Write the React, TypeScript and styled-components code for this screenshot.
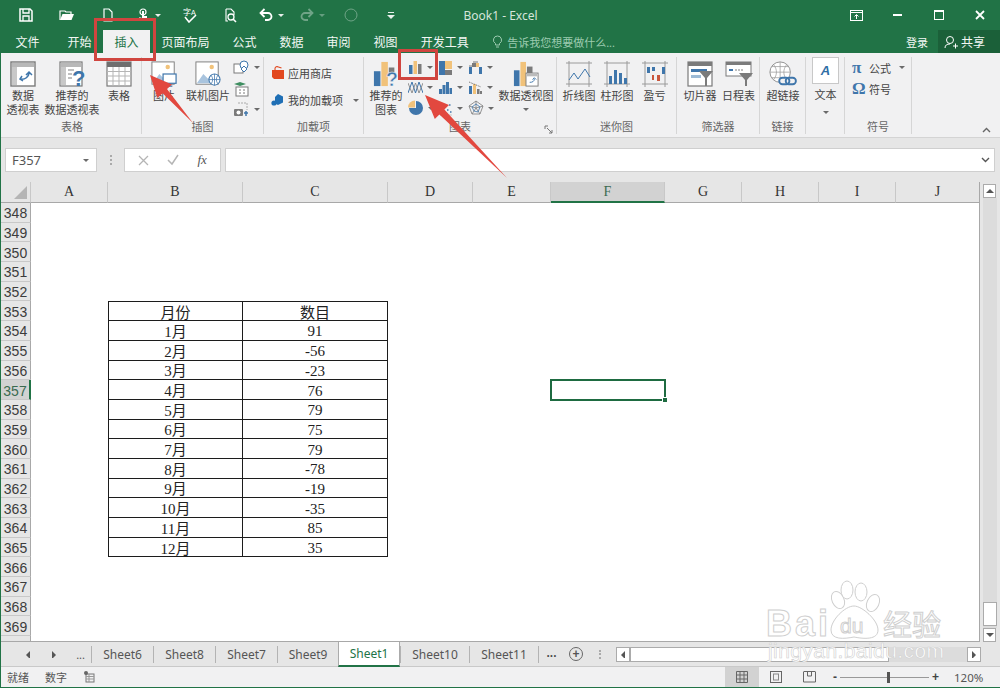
import React from "react";
import styled, { createGlobalStyle } from "styled-components";

const GREEN = "#217346";
const UI_FONT = `"Noto Sans", "Noto Sans CJK SC", sans-serif`;

const GlobalStyle = createGlobalStyle`
  html, body {
    margin: 0;
    padding: 0;
    background: #fff;
  }
  * {
    box-sizing: border-box;
  }
`;

const Window = styled.div`
  position: relative;
  width: 1000px;
  height: 688px;
  overflow: hidden;
  display: flex;
  flex-direction: column;
  border-left: 1px solid ${GREEN};
  border-bottom: 1px solid ${GREEN};
  font-family: ${UI_FONT};
  color: #444;
  font-size: 11px;
`;

/* ---- title bar ---- */
const TitleBar = styled.div`
  height: 30px;
  flex: none;
  background: ${GREEN};
  display: grid;
  grid-template-columns: 1fr auto 1fr;
  align-items: center;
`;

const Qat = styled.div`
  display: flex;
  align-items: center;
  padding-left: 4px;
`;

const QatButton = styled.div<{ $w?: number; $dim?: boolean }>`
  width: ${(p) => p.$w ?? 41}px;
  height: 30px;
  display: flex;
  align-items: center;
  justify-content: center;
  gap: 5px;
  opacity: ${(p) => (p.$dim ? 0.35 : 1)};
`;

const WhiteCaret = styled.span`
  width: 0;
  height: 0;
  border-left: 3px solid transparent;
  border-right: 3px solid transparent;
  border-top: 3px solid #e8f0eb;
`;

const DocTitle = styled.div`
  color: #d5e5db;
  font-size: 12px;
`;

const WindowButtons = styled.div`
  display: flex;
  justify-content: flex-end;
`;

const WindowButton = styled.div`
  width: 41px;
  height: 30px;
  display: flex;
  align-items: center;
  justify-content: center;
`;

/* ---- ribbon tabs ---- */
const TabRow = styled.div`
  height: 23px;
  flex: none;
  background: ${GREEN};
  display: flex;
  align-items: stretch;
  padding-left: 3px;
`;

const RibbonTab = styled.div<{ $active?: boolean; $file?: boolean }>`
  padding: 0 11.5px;
  margin-right: ${(p) => (p.$file ? 5 : 0)}px;
  display: flex;
  align-items: center;
  font-size: 12px;
  color: ${(p) => (p.$active ? "#217346" : "#f2f7f4")};
  background: ${(p) => (p.$active ? "#f1f1f2" : "transparent")};
`;

const TellMe = styled.div`
  display: flex;
  align-items: center;
  gap: 4px;
  margin-left: 12px;
  color: #9ccbb0;
  font-size: 11px;
`;

const TabRowEnd = styled.div`
  margin-left: auto;
  display: flex;
  align-items: stretch;
  color: #f2f7f4;
  font-size: 11px;
`;

const SignIn = styled.div`
  display: flex;
  align-items: center;
  padding-right: 10px;
`;

const ShareButton = styled.div`
  width: 62px;
  background: #1b6039;
  display: flex;
  align-items: center;
  gap: 3px;
  padding-left: 6px;
  font-size: 12px;
`;

/* ---- ribbon ---- */
const Ribbon = styled.div`
  position: relative;
  height: 85px;
  flex: none;
  background: #f1f1f2;
  display: flex;
  padding: 4px 0 3px 2px;
  border-bottom: 1px solid #d4d4d4;
`;

const Group = styled.div<{ $w: number }>`
  width: ${(p) => p.$w}px;
  flex: none;
  display: flex;
  flex-direction: column;
  border-right: 1px solid #d6d6d6;
`;

const GroupBody = styled.div<{ $pad?: number }>`
  flex: 1;
  display: flex;
  align-items: flex-start;
  min-height: 0;
  padding-left: ${(p) => p.$pad ?? 0}px;
`;

const GroupLabel = styled.div`
  height: 16px;
  line-height: 17px;
  text-align: center;
  color: #666;
  font-size: 11px;
`;

const BigButton = styled.div<{ $w: number }>`
  width: ${(p) => p.$w}px;
  flex: none;
  display: flex;
  flex-direction: column;
  align-items: center;
  padding-top: 4px;
  line-height: 14px;
  text-align: center;
  white-space: nowrap;
  svg {
    margin-bottom: 2px;
    display: block;
    height: 26px;
    width: auto;
  }
`;

const Caret = styled.span`
  display: inline-block;
  flex: none;
  width: 0;
  height: 0;
  border-left: 3px solid transparent;
  border-right: 3px solid transparent;
  border-top: 3px solid #6a6a6a;
`;

const CaretLine = styled.div`
  height: 12px;
  display: flex;
  align-items: center;
  justify-content: center;
`;

const SmallColumn = styled.div`
  display: flex;
  flex-direction: column;
  padding-left: 3px;
`;

const SmallIconRow = styled.div`
  height: 21px;
  display: flex;
  align-items: center;
  gap: 5px;
`;

const AddinColumn = styled.div`
  width: 100%;
  display: flex;
  flex-direction: column;
  gap: 5px;
  padding: 5px 0 0 7px;
`;

const AddinRow = styled.div`
  height: 22px;
  display: flex;
  align-items: center;
  gap: 3px;
  white-space: nowrap;
`;

const AddinCaret = styled(Caret)`
  margin-left: 7px;
`;

const ChartMatrix = styled.div`
  width: 89px;
  flex: none;
  display: grid;
  grid-template-columns: repeat(3, 30px);
  grid-auto-rows: 20.5px;
`;

const ChartCell = styled.div`
  display: flex;
  align-items: center;
  gap: 4px;
`;

const DialogLauncher = styled.svg`
  position: absolute;
  right: 3px;
  bottom: 0;
`;

const ChartsGroup = styled(Group)`
  position: relative;
`;

const TextBox = styled.div`
  width: 27px;
  height: 27px;
  background: #fff;
  border: 1px solid #c8c8c8;
  display: flex;
  align-items: center;
  justify-content: center;
  color: #2f6ea5;
  font: italic bold 13px "Liberation Sans", sans-serif;
`;

const TextButton = styled(BigButton)`
  padding-top: 0;
  gap: 4px;
`;

const SymbolColumn = styled.div`
  display: flex;
  flex-direction: column;
  padding-left: 7px;
  width: 100%;
`;

const SymbolRow = styled.div`
  height: 21px;
  display: flex;
  align-items: center;
  white-space: nowrap;
`;

const SymbolGlyph = styled.span`
  width: 17px;
  flex: none;
  color: #3f76ab;
  font: bold 17px "Liberation Serif", serif;
`;

const SymbolCaret = styled(Caret)`
  margin-left: 8px;
`;

const CollapseChevron = styled.svg`
  position: absolute;
  right: 9px;
  bottom: 4px;
`;

/* ---- formula bar ---- */
const FormulaBar = styled.div`
  height: 44px;
  flex: none;
  background: #e6e6e6;
  display: flex;
  align-items: center;
  padding: 0 5px 0 4px;
`;

const NameBox = styled.div`
  width: 92px;
  height: 24px;
  background: #fff;
  border: 1px solid #cfcfcf;
  display: flex;
  align-items: center;
  justify-content: space-between;
  padding: 0 7px 0 6px;
  font-size: 13px;
  color: #555;
`;

const GripDots = styled.div`
  width: 27px;
  display: flex;
  flex-direction: column;
  align-items: center;
  gap: 2px;
  i {
    width: 2px;
    height: 2px;
    background: #aaa;
  }
`;

const FormulaTools = styled.div`
  width: 97px;
  height: 24px;
  background: #fff;
  border: 1px solid #cfcfcf;
  display: flex;
  align-items: center;
  justify-content: space-around;
  padding: 0 4px;
  margin-right: 4px;
`;

const FxLabel = styled.span`
  font: italic 13px "Liberation Serif", serif;
  color: #555;
`;

const FormulaInput = styled.div`
  flex: 1;
  height: 24px;
  background: #fff;
  border: 1px solid #cfcfcf;
  display: flex;
  align-items: center;
  justify-content: flex-end;
  padding-right: 4px;
`;

/* ---- sheet ---- */
const SheetArea = styled.div`
  flex: 1;
  min-height: 0;
  display: flex;
  background: #e6e6e6;
`;

const SheetGrid = styled.div`
  position: relative;
  width: 979px;
  flex: none;
  overflow: hidden;
  background: #fff;
  border-right: 1px solid #a8a8a8;
  border-bottom: 1px solid #a8a8a8;
  display: grid;
  grid-template-columns: 30px 77px 135px 145px 85px 78px 114px 77px 77px 77px 84px;
  grid-template-rows: 21px;
  grid-auto-rows: 19.7px;
  align-content: start;
`;

const Corner = styled.div`
  background: #e6e6e6;
  border-right: 1px solid #c8c8c8;
  border-bottom: 1px solid #a8a8a8;
  display: flex;
  align-items: flex-end;
  justify-content: flex-end;
  padding: 0 3px 3px 0;
`;

const ColHeader = styled.div<{ $selected?: boolean }>`
  background: ${(p) => (p.$selected ? "#d2d2d2" : "#e6e6e6")};
  border-right: 1px solid #c8c8c8;
  border-bottom: ${(p) => (p.$selected ? `2px solid ${GREEN}` : "1px solid #a8a8a8")};
  display: flex;
  align-items: center;
  justify-content: center;
  font: 14px "Liberation Serif", serif;
  color: ${(p) => (p.$selected ? "#3a6a50" : "#333")};
`;

const RowHeader = styled.div<{ $selected?: boolean }>`
  background: ${(p) => (p.$selected ? "#d2d2d2" : "#e6e6e6")};
  border-bottom: 1px solid #c8c8c8;
  border-right: ${(p) => (p.$selected ? `2px solid ${GREEN}` : "1px solid #a8a8a8")};
  display: flex;
  align-items: center;
  justify-content: center;
  padding-top: 2px;
  font: 14px "Liberation Sans", sans-serif;
  color: ${(p) => (p.$selected ? "#3a6a50" : "#3c3c3c")};
`;

const Cell = styled.div<{ $table?: boolean; $first?: boolean; $top?: boolean; $num?: boolean }>`
  position: relative;
  display: flex;
  align-items: center;
  justify-content: center;
  font: 15px "Liberation Serif", "Noto Sans CJK SC", serif;
  color: #222;
  padding-top: ${(p) => (p.$num ? 3 : 0)}px;
  ${(p) => (p.$table ? "border-right: 1px solid #1c1c1c; border-bottom: 1px solid #1c1c1c;" : "")}
  ${(p) => (p.$first ? "border-left: 1px solid #1c1c1c;" : "")}
  ${(p) => (p.$top ? "border-top: 1px solid #1c1c1c;" : "")}
`;

const ActiveCell = styled(Cell)`
  outline: 2px solid #1e6b41;
  outline-offset: -1px;
`;

const FillHandle = styled.span`
  position: absolute;
  right: -3px;
  bottom: -3px;
  width: 6px;
  height: 6px;
  background: #1e6b41;
  border: 1px solid #fff;
`;

const VScroll = styled.div`
  width: 20px;
  flex: none;
  display: flex;
  flex-direction: column;
  padding: 2px 3px 0 3px;
`;

const ScrollArrow = styled.div`
  width: 13px;
  height: 14px;
  background: #fff;
  border: 1px solid #ababab;
  flex: none;
  display: flex;
  align-items: center;
  justify-content: center;
`;

const VScrollTrack = styled.div`
  flex: 1;
  background: #dcdcdc;
  display: flex;
  flex-direction: column;
  justify-content: flex-end;
  padding-bottom: 2px;
`;

const VScrollThumb = styled.div`
  height: 24px;
  background: #fff;
  border: 1px solid #ababab;
`;

/* ---- sheet tabs ---- */
const SheetBar = styled.div`
  height: 25px;
  flex: none;
  background: #e6e6e6;
  display: flex;
  align-items: center;
  border-bottom: 1px solid #c9c9c9;
`;

const SheetNav = styled.div`
  width: 90px;
  flex: none;
  display: flex;
  align-items: center;
  justify-content: flex-end;
  gap: 18px;
  padding-right: 6px;
  color: #555;
`;

const SheetTab = styled.div<{ $active?: boolean; $w: number }>`
  width: ${(p) => p.$w}px;
  height: ${(p) => (p.$active ? 25 : 17)}px;
  flex: none;
  display: flex;
  align-items: center;
  justify-content: center;
  font-size: 12px;
  color: ${(p) => (p.$active ? GREEN : "#555")};
  background: ${(p) => (p.$active ? "#fff" : "transparent")};
  border-left: 1px solid ${(p) => (p.$active ? "#ababab" : "#b3b3b3")};
  border-right: ${(p) => (p.$active ? "1px solid #ababab" : "none")};
  border-bottom: ${(p) => (p.$active ? `2px solid ${GREEN}` : "none")};
`;

const SheetEllipsis = styled.div`
  width: 26px;
  flex: none;
  height: 17px;
  border-left: 1px solid #b3b3b3;
  text-align: center;
  line-height: 14px;
  font-size: 12px;
  font-weight: 600;
`;

const AddSheet = styled.div`
  width: 14px;
  height: 14px;
  flex: none;
  border: 1.4px solid #666;
  border-radius: 50%;
  margin-left: 5px;
  display: flex;
  align-items: center;
  justify-content: center;
  color: #555;
  font: bold 12px/12px "Liberation Sans", sans-serif;
`;

const HGrip = styled(GripDots)`
  width: 33px;
  gap: 1.5px;
`;

const HScroll = styled.div`
  width: 365px;
  height: 15px;
  flex: none;
  background: #dcdcdc;
  display: flex;
  align-items: stretch;
`;

const HScrollArrow = styled.div`
  width: 14px;
  background: #fff;
  border: 1px solid #ababab;
  display: flex;
  align-items: center;
  justify-content: center;
`;

const HScrollThumb = styled.div`
  width: 259px;
  background: #fff;
  border: 1px solid #ababab;
`;

const HScrollRest = styled.div`
  flex: 1;
`;

/* ---- status bar ---- */
const StatusBar = styled.div`
  height: 20px;
  flex: none;
  background: #f1f1f2;
  display: flex;
  align-items: center;
  padding-left: 6px;
  gap: 16px;
  color: #555;
`;

const StatusRight = styled.div`
  margin-left: auto;
  display: flex;
  align-items: center;
  height: 100%;
`;

const ViewButton = styled.div<{ $active?: boolean }>`
  width: 34px;
  height: 100%;
  display: flex;
  align-items: center;
  justify-content: center;
  background: ${(p) => (p.$active ? "#d2d2d2" : "transparent")};
`;

const ZoomBar = styled.div`
  display: flex;
  align-items: center;
  gap: 3px;
  margin-left: 6px;
  color: #444;
  font: bold 12px "Liberation Sans", sans-serif;
`;

const ZoomTrack = styled.div`
  position: relative;
  width: 89px;
  height: 1px;
  background: #999;
`;

const ZoomThumb = styled.span`
  position: absolute;
  left: 47px;
  top: -5px;
  width: 3px;
  height: 11px;
  background: #555;
`;

const ZoomValue = styled.div`
  width: 61px;
  padding-left: 15px;
  color: #555;
  font: 11.5px "Noto Sans", sans-serif;
`;

const Annotation = styled.svg`
  position: absolute;
  left: -1px;
  top: 0;
  pointer-events: none;
`;

/* ---- icons ---- */
const G = "#7b7b7b";
const B = "#3f76ab";
const O = "#f1c27a";

const Sv: React.FC<{ w: number; h?: number; children: React.ReactNode }> = ({ w, h, children }) => (
  <svg width={w} height={h ?? w} viewBox={`0 0 ${w} ${h ?? w}`} fill="none">
    {children}
  </svg>
);

const SaveIcon = () => (
  <Sv w={14}>
    <path d="M1 1h10l2 2v10H1z" stroke="#fff" strokeWidth="1.5" />
    <path d="M4 1v4h6V1M4 13V8h6v5" stroke="#fff" strokeWidth="1.3" />
  </Sv>
);
const OpenIcon = () => (
  <Sv w={16}>
    <path d="M1 13V4h5l1 1h5v2" stroke="#fff" strokeWidth="1.2" />
    <path d="M1 13l2.5-6H15l-2.5 6z" fill="#fff" />
  </Sv>
);
const NewIcon = () => (
  <Sv w={14}>
    <path d="M3 1h5l3 3v9H3z" stroke="#fff" strokeWidth="1.2" />
  </Sv>
);
const TouchIcon = () => (
  <Sv w={14}>
    <circle cx="7" cy="4" r="3" stroke="#fff" strokeWidth="1.2" />
    <path d="M6 3h2v5h3v3l-1 2H5L3 9l3 1z" fill="#fff" />
  </Sv>
);
const SpellIcon = () => (
  <Sv w={16}>
    <text x="1" y="8" fontSize="8" fill="#fff" fontFamily="Noto Sans CJK SC">字</text>
    <text x="9" y="8" fontSize="7" fill="#fff" fontFamily="Liberation Sans">A</text>
    <path d="M3 10l4 5 7-7" stroke="#fff" strokeWidth="1.6" />
  </Sv>
);
const PreviewIcon = () => (
  <Sv w={15}>
    <path d="M3 1h5l3 3v3M5 13H3V1" stroke="#fff" strokeWidth="1.1" />
    <circle cx="8" cy="9" r="3" stroke="#fff" strokeWidth="1.3" />
    <path d="M10 11l3 3" stroke="#fff" strokeWidth="1.6" />
  </Sv>
);
const UndoIcon = ({ flip }: { flip?: boolean }) => (
  <Sv w={14}>
    <g transform={flip ? "translate(14 0) scale(-1 1)" : undefined}>
      <path d="M2 5h7a3.5 3.5 0 0 1 0 7H6" stroke="#fff" strokeWidth="1.8" />
      <path d="M5.5 1L1.5 5l4 4" stroke="#fff" strokeWidth="1.8" />
    </g>
  </Sv>
);

const PivotIcon = () => (
  <Sv w={26}>
    <rect x="1" y="1" width="24" height="24" fill="#fff" stroke={G} strokeWidth="1.4" />
    <rect x="2" y="2" width="22" height="4" fill="#b8b8b8" />
    <rect x="2" y="6" width="5" height="18" fill="#c8c8c8" />
    <path d="M10 18c5 1 9-2 9-7M16 14l3-3 3 3M12 15l-2 3 3 2" stroke={B} strokeWidth="1.5" />
  </Sv>
);
const RecommendPivotIcon = () => (
  <Sv w={26}>
    <rect x="1" y="1" width="22" height="24" fill="#fff" stroke={G} strokeWidth="1.2" />
    <rect x="2" y="2" width="20" height="4" fill="#b8b8b8" />
    <rect x="2" y="6" width="5" height="18" fill="#c8c8c8" />
    <path d="M9 9h6M9 13h4M9 17h4" stroke="#aaa" strokeWidth="1.4" />
    <text x="13" y="25" fontSize="22" fontWeight="bold" fill={B} fontFamily="Liberation Sans">?</text>
  </Sv>
);
const TableIcon = () => (
  <Sv w={26}>
    <rect x="1" y="1" width="24" height="24" fill="#fff" stroke={G} strokeWidth="1.2" />
    <rect x="1" y="1" width="24" height="5" fill="#6f6f6f" />
    <path d="M1 10.5h24M1 15h24M1 20h24M7 6v19M13 6v19M19 6v19" stroke="#b5b5b5" />
  </Sv>
);
const PictureFrame = () => (
  <>
    <rect x="1" y="1" width="24" height="24" fill="#fff" stroke={G} strokeWidth="1" />
    <circle cx="18" cy="6.5" r="2.4" fill={O} />
    <path d="M2 24l7-10 5 5 3-3 7 8z" fill="#a9c4de" />
  </>
);
const PictureIcon = () => (
  <Sv w={28}>
    <PictureFrame />
    <rect x="13" y="14" width="14" height="10" fill="#fff" stroke={B} strokeWidth="1.3" />
    <path d="M17 27h6M20 24v3" stroke={B} strokeWidth="1.3" />
  </Sv>
);
const OnlinePictureIcon = () => (
  <Sv w={28}>
    <PictureFrame />
    <circle cx="21" cy="20" r="6" fill="#fff" stroke={B} strokeWidth="1.1" />
    <path d="M15 20h12M21 14v12M17.5 15.5c2 3 2 6 0 9M24.5 15.5c-2 3-2 6 0 9" stroke={B} strokeWidth=".8" />
  </Sv>
);
const ShapesIcon = () => (
  <Sv w={16}>
    <rect x="1" y="4" width="9" height="9" fill="#fff" stroke={G} />
    <circle cx="11" cy="5" r="4" fill="#fff" stroke={B} />
    <path d="M8 9l3 3 3-3-3-3z" fill="#fff" stroke={B} />
  </Sv>
);
const SmartArtIcon = () => (
  <Sv w={16}>
    <path d="M1 3l6-2 6 2-6 2z" fill="#3e8e60" />
    <rect x="3" y="6" width="12" height="9" fill="#fff" stroke={G} />
    <path d="M6 9h2M10 9h2M6 12h2M10 12h2" stroke={G} />
  </Sv>
);
const ScreenshotIcon = () => (
  <Sv w={16}>
    <path d="M5 1h9v7" stroke="#aaa" strokeDasharray="2 1" />
    <rect x="1" y="7" width="9" height="7" rx="1" fill={G} />
    <circle cx="5.5" cy="10.5" r="2" fill="#fff" />
    <path d="M11 11h4M13 9v5" stroke={B} strokeWidth="1.5" />
  </Sv>
);
const StoreIcon = () => (
  <Sv w={14}>
    <path d="M1 4h12v9H3l-2-2z" fill="#e2481f" />
    <path d="M4 5V2.5C4 1 6 0 7.5 1l3 1" stroke="#e2481f" strokeWidth="1.1" />
  </Sv>
);
const AddinIcon = () => (
  <Sv w={14}>
    <path d="M7 1l5 2.5v6L7 12 4 10.5V4z" fill="#1f6fb5" />
    <circle cx="3" cy="10" r="2.6" fill="#1f6fb5" />
  </Sv>
);
const RecommendChartIcon = () => (
  <Sv w={28}>
    <rect x="1" y="11" width="7" height="16" fill={B} />
    <rect x="9" y="1" width="7" height="26" fill={O} />
    <rect x="17" y="7" width="6" height="6" fill={G} />
    <text x="14" y="27" fontSize="21" fontWeight="bold" fill={B} fontFamily="Liberation Sans" stroke="#f1f1f2" strokeWidth=".5">?</text>
  </Sv>
);
const BarsIcon = () => (
  <Sv w={15}>
    <rect x="1" y="5" width="3.5" height="9" fill={B} />
    <rect x="5.5" y="1" width="3.5" height="13" fill={O} />
    <rect x="10" y="4" width="3.5" height="10" fill={G} />
  </Sv>
);
const HierarchyIcon = () => (
  <Sv w={15}>
    <rect x="1" y="1" width="6" height="14" fill={B} />
    <rect x="7" y="1" width="7" height="8" fill={O} />
    <rect x="7" y="10" width="7" height="5" fill={G} />
  </Sv>
);
const WaterfallIcon = () => (
  <Sv w={15}>
    <path d="M1 14V7h3v7z" fill={B} />
    <path d="M4 7V3h4v4z" fill={G} />
    <path d="M8 3h3v4H8z" fill={O} />
    <path d="M11 7h3v7h-3z" fill={B} />
    <path d="M1 6h3M5 2h5" stroke={G} />
  </Sv>
);
const LineAreaIcon = () => (
  <Sv w={15}>
    <path d="M0 13L4 2l3.5 11L11 2l4 11" stroke={B} strokeWidth="1" />
    <path d="M0 3l4 10 3.500-10L11 13l4-10" stroke={G} strokeWidth=".8" />
  </Sv>
);
const HistogramIcon = () => (
  <Sv w={15}>
    <path d="M1 9h3v5H1zM4.5 5h3v9h-3zM8 2h3v12H8zM11.500 8H14v6h-2.500z" fill={B} />
  </Sv>
);
const ParetoIcon = () => (
  <Sv w={15}>
    <path d="M1 6h3v8H1z" fill={B} />
    <path d="M5 4h3v10H5z" fill={O} />
    <path d="M9 9h2.5v5H9zM12 11h2v3h-2z" fill={G} />
    <path d="M1 2l12 5" stroke={G} strokeDasharray="1.5 1" />
  </Sv>
);
const PieIcon = () => (
  <Sv w={16}>
    <path d="M8 8V1a7 7 0 1 1-7 7z" fill={B} />
    <path d="M7 7V0a7 7 0 0 0-7 7z" fill={O} transform="translate(0 .5)" />
  </Sv>
);
const ScatterIcon = () => (
  <Sv w={15}>
    <path d="M2 2v12h12" stroke="#c6c6c6" />
    <path d="M4 10h1.5M6 6h1.5M9 9h1.5M11 4h1.5M12 11h1.5" stroke={B} strokeWidth="1.5" />
  </Sv>
);
const RadarIcon = () => (
  <Sv w={16}>
    <path d="M8 1l7 5-3 8H4L1 6zM8 1v7M15 6L8 8M12 14L8 8M4 14l4-6M1 6l7 2" stroke={G} strokeWidth=".8" />
    <path d="M8 4l4 3-2 5-4-1-2-4z" stroke={B} strokeWidth=".8" />
  </Sv>
);
const PivotChartIcon = () => (
  <Sv w={28}>
    <rect x="1" y="10" width="6" height="17" fill={B} />
    <rect x="8" y="1" width="6" height="26" fill={O} />
    <rect x="15" y="6" width="6" height="7" fill={G} />
    <rect x="14" y="13" width="13" height="14" fill="#fff" stroke={G} />
    <rect x="15" y="14" width="11" height="2.5" fill="#bbb" />
    <path d="M18 23c3 0 5-1 5-4M21 20l2-2 2 2" stroke={B} />
  </Sv>
);
const SparkFrame = ({ children }: { children: React.ReactNode }) => (
  <Sv w={28} h={26}>
    <path d="M1 2h26M1 23h26M4 0v26M24 0v26" stroke="#9a9a9a" />
    {children}
  </Sv>
);
const SparkLineIcon = () => (
  <SparkFrame>
    <path d="M4 19l5-7 4 6 7-10 5 8" stroke={B} strokeWidth="1" />
  </SparkFrame>
);
const SparkBarIcon = () => (
  <SparkFrame>
    <path d="M6 15h3v8H6zM11 9h3v14h-3zM16 12h3v11h-3zM21 17h3v6h-3z" fill={B} />
  </SparkFrame>
);
const WinLossIcon = () => (
  <SparkFrame>
    <path d="M6 6h3v6H6zM11 6h3v4h-3zM21 6h3v7h-3z" fill={B} />
    <path d="M16 14h3v6h-3zM11 14h2v5h-2z" fill="#c9563c" />
  </SparkFrame>
);
const SlicerIcon = () => (
  <Sv w={26}>
    <rect x="1" y="1" width="24" height="24" fill="#fff" stroke={G} strokeWidth="1.2" />
    <rect x="1" y="1" width="24" height="4" fill={G} />
    <rect x="4" y="8" width="16" height="3" fill={B} />
    <rect x="4" y="14" width="10" height="3" fill="#9dbbd6" />
    <path d="M12 10h14l-6 7v8h-2v-8z" fill={G} />
  </Sv>
);
const TimelineIcon = () => (
  <Sv w={28} h={26}>
    <rect x="1" y="1" width="25" height="14" fill="#fff" stroke={G} />
    <rect x="1" y="1" width="25" height="3" fill={G} />
    <path d="M4 9h4" stroke={B} strokeWidth="2" />
    <path d="M10 9h8" stroke="#aaa" strokeWidth="1.5" strokeDasharray="2 1" />
    <path d="M14 12h14l-6 7v6h-2v-6z" fill={G} />
  </Sv>
);
const LinkIcon = () => (
  <Sv w={30} h={28}>
    <circle cx="12" cy="12" r="11" fill="#fff" stroke="#8c8c8c" />
    <path d="M1 12h22M12 1v22M5 4c4 5 4 11 0 16M19 4c-4 5-4 11 0 16M3 6h18M3 18h18" stroke="#9a9a9a" strokeWidth=".8" />
    <rect x="11" y="18" width="11" height="7" rx="3.5" stroke={B} strokeWidth="2" fill="#f1f1f2" />
    <rect x="18" y="18" width="11" height="7" rx="3.5" stroke={B} strokeWidth="2" />
  </Sv>
);
const Chevron = ({ color = "#666" }: { color?: string }) => (
  <svg width="9" height="6" viewBox="0 0 9 6" fill="none">
    <path d="M1 1l3.5 3.5L8 1" stroke={color} strokeWidth="1.4" />
  </svg>
);
const ArrowTri = ({ dir }: { dir: "up" | "down" | "left" | "right" }) => {
  const d = { up: "M0 5l4-4 4 4z", down: "M0 1l4 4 4-4z", left: "M6 0v8L2 4z", right: "M2 0v8l4-4z" }[dir];
  return (
    <svg width="8" height="8" viewBox="0 0 8 6" fill="#555">
      <path d={d} />
    </svg>
  );
};

const Watermark = () => (
  <g fill="#fff" stroke="#cfcfcf" strokeWidth="1" fontFamily="Liberation Sans, sans-serif">
    <ellipse cx="838" cy="600" rx="6" ry="9" transform="rotate(-25 838 600)" />
    <ellipse cx="847" cy="590" rx="6" ry="9" />
    <ellipse cx="861" cy="592" rx="6" ry="9" />
    <ellipse cx="873" cy="603" rx="6" ry="9" transform="rotate(25 873 603)" />
    <path d="M854 606c8 0 24 14 24 24s-14 9-24 7c-10 2-23 3-23-7s14-24 23-24z" />
    <text x="766" y="636" fontSize="36" fontWeight="bold" fill="#fff" textLength="62">Bai</text>
    <text x="840" y="633" fontSize="21" fill="#fff">du</text>
    <text x="883" y="636" fontSize="29" fill="#fff" fontFamily="Noto Sans CJK SC">经验</text>
    <text x="768" y="658" fontSize="21" fill="#fff" strokeWidth=".6" textLength="176">jingyan.baidu.com</text>
  </g>
);

const Arrow = ({ points }: { points: string }) => <polygon points={points} fill="#e2483f" />;

/* ---- data ---- */
const qat = [SaveIcon, OpenIcon, NewIcon];
const tabs = ["开始", "插入", "页面布局", "公式", "数据", "审阅", "视图", "开发工具"];
const columns = ["A", "B", "C", "D", "E", "F", "G", "H", "I", "J"];
const rows = Array.from({ length: 23 }, (_, i) => 348 + i);
const tableData: [string, string][] = [
  ["月份", "数目"],
  ["1月", "91"],
  ["2月", "-56"],
  ["3月", "-23"],
  ["4月", "76"],
  ["5月", "79"],
  ["6月", "75"],
  ["7月", "79"],
  ["8月", "-78"],
  ["9月", "-19"],
  ["10月", "-35"],
  ["11月", "85"],
  ["12月", "35"],
];
const sheetTabs = [
  { name: "Sheet6", w: 62 },
  { name: "Sheet8", w: 62 },
  { name: "Sheet7", w: 62 },
  { name: "Sheet9", w: 61 },
  { name: "Sheet1", w: 62, active: true },
  { name: "Sheet10", w: 69 },
  { name: "Sheet11", w: 69 },
];

const chartIcons = [
  BarsIcon,
  HierarchyIcon,
  WaterfallIcon,
  LineAreaIcon,
  HistogramIcon,
  ParetoIcon,
  PieIcon,
  ScatterIcon,
  RadarIcon,
];

const SheetRows = () => (
  <>
    <Corner>
      <svg width="13" height="13" viewBox="0 0 13 13">
        <path d="M13 0v13H0z" fill="#b5b5b5" />
      </svg>
    </Corner>
    {columns.map((c) => (
      <ColHeader key={c} $selected={c === "F"}>
        {c}
      </ColHeader>
    ))}
    {rows.map((r) => {
      const data = tableData[r - 353];
      return (
        <React.Fragment key={r}>
          <RowHeader $selected={r === 357}>{r}</RowHeader>
          {columns.map((c, i) => {
            if (c === "F" && r === 357) {
              return (
                <ActiveCell key={c}>
                  <FillHandle />
                </ActiveCell>
              );
            }
            if (data && (c === "B" || c === "C")) {
              return (
                <Cell key={c} $table $first={c === "B"} $top={r === 353} $num={c === "C" && r > 353}>
                  {data[i - 1]}
                </Cell>
              );
            }
            return <Cell key={c} />;
          })}
        </React.Fragment>
      );
    })}
  </>
);

const App: React.FC = () => {
  return (
    <Window>
      <GlobalStyle />
      <TitleBar>
        <Qat>
          {qat.map((Icon, i) => (
            <QatButton key={i}>
              <Icon />
            </QatButton>
          ))}
          <QatButton>
            <TouchIcon />
            <WhiteCaret />
          </QatButton>
          <QatButton>
            <SpellIcon />
          </QatButton>
          <QatButton>
            <PreviewIcon />
          </QatButton>
          <QatButton>
            <UndoIcon />
            <WhiteCaret />
          </QatButton>
          <QatButton $dim>
            <UndoIcon flip />
            <WhiteCaret />
          </QatButton>
          <QatButton $w={36} $dim>
            <Sv w={14}>
              <circle cx="7" cy="7" r="6" stroke="#fff" />
            </Sv>
          </QatButton>
          <QatButton $w={44}>
            <svg width="8" height="7" viewBox="0 0 8 7">
              <path d="M1 0h6v1H1zM0 3h8L4 7z" fill="#e8f0eb" />
            </svg>
          </QatButton>
        </Qat>
        <DocTitle>Book1 - Excel</DocTitle>
        <WindowButtons>
          <WindowButton>
            <Sv w={13} h={11}>
              <rect x=".5" y=".5" width="12" height="10" stroke="#fff" />
              <path d="M1 2.5h11" stroke="#fff" />
              <path d="M6.5 9V5M4.5 6.5l2-2 2 2" stroke="#fff" />
            </Sv>
          </WindowButton>
          <WindowButton>
            <Sv w={9} h={3}>
              <rect width="9" height="2" fill="#fff" />
            </Sv>
          </WindowButton>
          <WindowButton>
            <Sv w={10}>
              <rect x=".5" y="1" width="9" height="8.5" stroke="#fff" />
              <rect x="0" y="0" width="10" height="2" fill="#fff" />
            </Sv>
          </WindowButton>
          <WindowButton>
            <Sv w={10}>
              <path d="M1 1l8 8M9 1l-8 8" stroke="#fff" strokeWidth="1.8" />
            </Sv>
          </WindowButton>
        </WindowButtons>
      </TitleBar>

      <TabRow>
        <RibbonTab $file>文件</RibbonTab>
        {tabs.map((t) => (
          <RibbonTab key={t} $active={t === "插入"}>
            {t}
          </RibbonTab>
        ))}
        <TellMe>
          <Sv w={11} h={14}>
            <path d="M5.5 1a4 4 0 0 0-2 7.5V10h4V8.5A4 4 0 0 0 5.5 1zM4 12h3" stroke="#9ccbb0" />
          </Sv>
          告诉我您想要做什么...
        </TellMe>
        <TabRowEnd>
          <SignIn>登录</SignIn>
          <ShareButton>
            <Sv w={14}>
              <circle cx="6" cy="5" r="3.5" stroke="#fff" />
              <path d="M1 13c0-3 2-4 5-4M9 11h5M11.5 8.5v5" stroke="#fff" />
            </Sv>
            共享
          </ShareButton>
        </TabRowEnd>
      </TabRow>

      <Ribbon>
        <Group $w={139}>
          <GroupBody>
            <BigButton $w={40}>
              <PivotIcon />
              数据
              <br />
              透视表
            </BigButton>
            <BigButton $w={58}>
              <RecommendPivotIcon />
              推荐的
              <br />
              数据透视表
            </BigButton>
            <BigButton $w={36}>
              <TableIcon />
              表格
            </BigButton>
          </GroupBody>
          <GroupLabel>表格</GroupLabel>
        </Group>

        <Group $w={122}>
          <GroupBody>
            <BigButton $w={44}>
              <PictureIcon />
              图片
            </BigButton>
            <BigButton $w={44}>
              <OnlinePictureIcon />
              联机图片
            </BigButton>
            <SmallColumn>
              <SmallIconRow>
                <ShapesIcon />
                <Caret />
              </SmallIconRow>
              <SmallIconRow>
                <SmartArtIcon />
              </SmallIconRow>
              <SmallIconRow>
                <ScreenshotIcon />
                <Caret />
              </SmallIconRow>
            </SmallColumn>
          </GroupBody>
          <GroupLabel>插图</GroupLabel>
        </Group>

        <Group $w={100}>
          <GroupBody>
            <AddinColumn>
              <AddinRow>
                <StoreIcon />
                应用商店
              </AddinRow>
              <AddinRow>
                <AddinIcon />
                我的加载项
                <AddinCaret />
              </AddinRow>
            </AddinColumn>
          </GroupBody>
          <GroupLabel>加载项</GroupLabel>
        </Group>

        <ChartsGroup $w={193}>
          <GroupBody>
            <BigButton $w={44}>
              <RecommendChartIcon />
              推荐的
              <br />
              图表
            </BigButton>
            <ChartMatrix>
              {chartIcons.map((Icon, i) => (
                <ChartCell key={i}>
                  <Icon />
                  <Caret />
                </ChartCell>
              ))}
            </ChartMatrix>
            <BigButton $w={58}>
              <PivotChartIcon />
              数据透视图
              <CaretLine>
                <Caret />
              </CaretLine>
            </BigButton>
          </GroupBody>
          <GroupLabel>图表</GroupLabel>
          <DialogLauncher width="9" height="9" viewBox="0 0 9 9" fill="none">
            <path d="M1 4V1h3M3 3l5 5M8 5v3H5" stroke="#777" />
          </DialogLauncher>
        </ChartsGroup>

        <Group $w={120}>
          <GroupBody $pad={3}>
            <BigButton $w={38}>
              <SparkLineIcon />
              折线图
            </BigButton>
            <BigButton $w={38}>
              <SparkBarIcon />
              柱形图
            </BigButton>
            <BigButton $w={37}>
              <WinLossIcon />
              盈亏
            </BigButton>
          </GroupBody>
          <GroupLabel>迷你图</GroupLabel>
        </Group>

        <Group $w={83}>
          <GroupBody $pad={3}>
            <BigButton $w={40}>
              <SlicerIcon />
              切片器
            </BigButton>
            <BigButton $w={37}>
              <TimelineIcon />
              日程表
            </BigButton>
          </GroupBody>
          <GroupLabel>筛选器</GroupLabel>
        </Group>

        <Group $w={46}>
          <GroupBody>
            <BigButton $w={46}>
              <LinkIcon />
              超链接
            </BigButton>
          </GroupBody>
          <GroupLabel>链接</GroupLabel>
        </Group>

        <Group $w={39}>
          <GroupBody>
            <TextButton $w={39}>
              <TextBox>A</TextBox>
              文本
              <CaretLine>
                <Caret />
              </CaretLine>
            </TextButton>
          </GroupBody>
          <GroupLabel />
        </Group>

        <Group $w={67}>
          <GroupBody>
            <SymbolColumn>
              <SymbolRow>
                <SymbolGlyph>π</SymbolGlyph>
                公式
                <SymbolCaret />
              </SymbolRow>
              <SymbolRow>
                <SymbolGlyph>Ω</SymbolGlyph>
                符号
              </SymbolRow>
            </SymbolColumn>
          </GroupBody>
          <GroupLabel>符号</GroupLabel>
        </Group>

        <CollapseChevron width="9" height="6" viewBox="0 0 9 6" fill="none">
          <path d="M1 5l3.5-3.5L8 5" stroke="#666" strokeWidth="1.4" />
        </CollapseChevron>
      </Ribbon>

      <FormulaBar>
        <NameBox>
          F357
          <Caret />
        </NameBox>
        <GripDots>
          <i />
          <i />
          <i />
        </GripDots>
        <FormulaTools>
          <Sv w={11}>
            <path d="M1 1l9 9M10 1l-9 9" stroke="#b5b5b5" strokeWidth="1.3" />
          </Sv>
          <Sv w={12}>
            <path d="M1 6l4 4 6-9" stroke="#b5b5b5" strokeWidth="1.5" />
          </Sv>
          <FxLabel>fx</FxLabel>
        </FormulaTools>
        <FormulaInput>
          <Chevron color="#555" />
        </FormulaInput>
      </FormulaBar>

      <SheetArea>
        <SheetGrid>
          <SheetRows />
        </SheetGrid>
        <VScroll>
          <ScrollArrow>
            <ArrowTri dir="up" />
          </ScrollArrow>
          <VScrollTrack>
            <VScrollThumb />
          </VScrollTrack>
          <ScrollArrow>
            <ArrowTri dir="down" />
          </ScrollArrow>
        </VScroll>
      </SheetArea>

      <SheetBar>
        <SheetNav>
          <ArrowTri dir="left" />
          <ArrowTri dir="right" />
          <span>...</span>
        </SheetNav>
        {sheetTabs.map((t) => (
          <SheetTab key={t.name} $active={t.active} $w={t.w}>
            {t.name}
          </SheetTab>
        ))}
        <SheetEllipsis>...</SheetEllipsis>
        <AddSheet>+</AddSheet>
        <HGrip>
          <i />
          <i />
          <i />
        </HGrip>
        <HScroll>
          <HScrollArrow>
            <ArrowTri dir="left" />
          </HScrollArrow>
          <HScrollThumb />
          <HScrollRest />
          <HScrollArrow>
            <ArrowTri dir="right" />
          </HScrollArrow>
        </HScroll>
      </SheetBar>

      <StatusBar>
        <span>就绪</span>
        <span>数字</span>
        <Sv w={12}>
          <rect x="3" y="3" width="8" height="8" stroke="#777" />
          <path d="M3 5.5h8M3 8h8M6 3v8" stroke="#999" />
          <circle cx="3" cy="2" r="2" fill="#666" />
        </Sv>
        <StatusRight>
          <ViewButton $active>
            <Sv w={12}>
              <path d="M.5.5h11v11H.5zM4 .5v11M8 .5v11M.5 4h11M.5 8h11" stroke="#666" />
            </Sv>
          </ViewButton>
          <ViewButton>
            <Sv w={12}>
              <rect x=".5" y=".5" width="11" height="11" stroke="#666" />
              <rect x="3.5" y="3" width="5" height="6" stroke="#888" />
            </Sv>
          </ViewButton>
          <ViewButton>
            <Sv w={13} h={12}>
              <path d="M.5 1v10h12V1M.5.5h12M4.5 1v4M8.5 1v4M4.5 5h4" stroke="#666" />
            </Sv>
          </ViewButton>
          <ZoomBar>
            <span>-</span>
            <ZoomTrack>
              <ZoomThumb />
            </ZoomTrack>
            <span>+</span>
          </ZoomBar>
          <ZoomValue>120%</ZoomValue>
        </StatusRight>
      </StatusBar>

      <Annotation width="1000" height="688" viewBox="0 0 1000 688" fill="none">
        <Watermark />
        <rect x="95.5" y="19.5" width="59" height="40" stroke="#d0453f" strokeWidth="3" />
        <rect x="399.5" y="50.5" width="37" height="28" stroke="#d0453f" strokeWidth="3" />
        <Arrow points="150,75 172,84.5 167,89 193,123 162.6,93.2 157.4,98" />
        <Arrow points="425,95 449,105 444.4,109.6 507,178 439.4,114.6 434.8,119" />
      </Annotation>
    </Window>
  );
};

export default App;
